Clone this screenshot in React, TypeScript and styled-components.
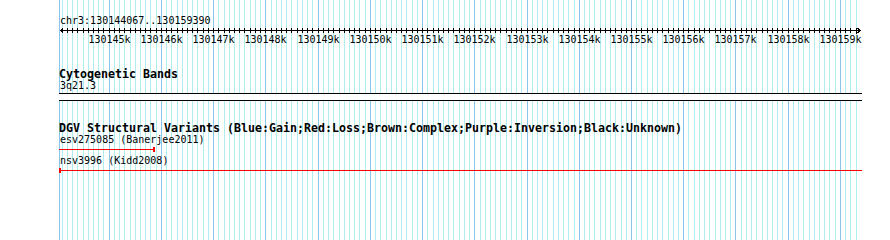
import React from 'react'
import styled, { createGlobalStyle } from 'styled-components'

const VIEW_START = 130144067
const VIEW_END = 130159390
const ORIGIN = 60.45
const SCALE = 0.052233 // px per bp
const WIDTH = 890
const HEIGHT = 240

const MINOR = '#afeeee'
const MAJOR = '#88c6ee'
const RED = '#ff0000'

const toX = (bp: number) => Math.floor(ORIGIN + (bp - VIEW_START) * SCALE)

const ticks: number[] = []
for (let bp = 130144100; bp <= 130159300; bp += 100) ticks.push(bp)
const majors = ticks.filter((bp) => bp % 1000 === 0)

type Feature = {
    name: string
    study: string
    start: number
    end: number
}

const variants: Feature[] = [
    { name: 'esv275085', study: 'Banerjee2011', start: 130140000, end: 130145860 },
    { name: 'nsv3996', study: 'Kidd2008', start: 130144050, end: 130170000 },
]

function Grid() {
    return (
        <GridLayer width={WIDTH} height={HEIGHT}>
            <rect x={59} y={0} width={1} height={HEIGHT} fill={MAJOR} />
            {ticks.map((bp) => (
                <rect
                    key={bp}
                    x={toX(bp)}
                    y={0}
                    width={1}
                    height={HEIGHT}
                    fill={bp % 1000 === 0 ? MAJOR : MINOR}
                />
            ))}
        </GridLayer>
    )
}

function Ruler() {
    const left = 60
    const right = 860
    return (
        <RulerSvg width={WIDTH} height={7}>
            <rect x={left} y={2} width={right - left + 1} height={1} fill="#000" />
            {ticks.map((bp) => (
                <rect key={bp} x={toX(bp)} y={0} width={1} height={5} fill="#000" />
            ))}
            <path d={`M${left + 3.5} -0.5 L${left + 0.5} 2.5 L${left + 3.5} 5.5`} stroke="#000" fill="none" />
            <path d={`M${right - 3.5} -0.5 L${right + 0.5} 2.5 L${right - 3.5} 5.5`} stroke="#000" fill="none" />
        </RulerSvg>
    )
}

function VariantGlyph({ feature }: { feature: Feature }) {
    const viewLeft = 59
    const viewRight = 861
    const startsInView = feature.start >= VIEW_START - 20
    const endsInView = feature.end <= VIEW_END
    const x1 = startsInView ? Math.max(viewLeft, toX(feature.start)) : viewLeft
    const x2 = endsInView ? toX(feature.end) : viewRight
    return (
        <>
            <SmallText>
                {feature.name} ({feature.study})
            </SmallText>
            <BarRow>
                <Bar style={{ left: x1, width: x2 - x1 + 1 }}>
                    {startsInView && <Cap $side="left" />}
                    {endsInView && <Cap $side="right" />}
                </Bar>
            </BarRow>
        </>
    )
}

export default function App() {
    return (
        <>
            <GlobalStyle />
            <Panel>
                <Grid />
                <Tracks>
                    <RulerTrack>
                        <SmallText>
                            chr3:{VIEW_START}..{VIEW_END}
                        </SmallText>
                        <Ruler />
                        <TickRow>
                            {majors.map((bp) => (
                                <TickLabel key={bp} style={{ left: toX(bp) + 0.5 }}>
                                    {bp / 1000}k
                                </TickLabel>
                            ))}
                        </TickRow>
                    </RulerTrack>

                    <Track>
                        <Heading>Cytogenetic Bands</Heading>
                        <SmallText>3q21.3</SmallText>
                        <Band />
                    </Track>

                    <Track>
                        <Heading>
                            DGV Structural Variants (Blue:Gain;Red:Loss;Brown:Complex;Purple:Inversion;Black:Unknown)
                        </Heading>
                        {variants.map((v, i) => (
                            <VariantBlock key={v.name} $first={i === 0}>
                                <VariantGlyph feature={v} />
                            </VariantBlock>
                        ))}
                    </Track>
                </Tracks>
            </Panel>
        </>
    )
}

const GlobalStyle = createGlobalStyle`
    body {
        margin: 0;
        background: #ffffff;
        font-family: "DejaVu Sans Mono", "Liberation Mono", monospace;
        color: #000;
    }
`

const Panel = styled.div`
    position: relative;
    width: ${WIDTH}px;
    height: ${HEIGHT}px;
    overflow: hidden;
    background: #ffffff;
`

const GridLayer = styled.svg`
    position: absolute;
    top: 0;
    left: 0;
    shape-rendering: crispEdges;
`

const Tracks = styled.div`
    position: relative;
    display: flex;
    flex-direction: column;
    padding-top: 16px;
`

const RulerTrack = styled.div`
    display: flex;
    flex-direction: column;
`

const Track = styled.div`
    display: flex;
    flex-direction: column;
    margin-top: 21px;
`

const SmallText = styled.div`
    padding-left: 60px;
    padding-bottom: 2px;
    font-size: 10px;
    line-height: 10px;
    height: 10px;
    white-space: nowrap;
`

const Heading = styled.div`
    padding-left: 59px;
    padding-bottom: 1px;
    font-size: 11.63px;
    font-weight: bold;
    line-height: 12px;
    height: 12px;
    white-space: nowrap;
`

const RulerSvg = styled.svg`
    display: block;
    shape-rendering: crispEdges;
`

const TickRow = styled.div`
    position: relative;
    height: 12px;
`

const TickLabel = styled.span`
    position: absolute;
    top: 0;
    transform: translateX(-50%);
    font-size: 10px;
    line-height: 10px;
    white-space: nowrap;
`

const Band = styled.div`
    margin-left: 59px;
    width: 803px;
    height: 6px;
    border-top: 1px solid #000;
    border-bottom: 1px solid #000;
    background: #ffffff;
`

const VariantBlock = styled.div<{ $first: boolean }>`
    display: flex;
    flex-direction: column;
    margin-top: ${(p) => (p.$first ? 0 : 4)}px;
`

const BarRow = styled.div`
    position: relative;
    height: 5px;
`

const Bar = styled.div`
    position: absolute;
    top: 2px;
    height: 1px;
    background: ${RED};
`

const Cap = styled.div<{ $side: 'left' | 'right' }>`
    position: absolute;
    top: -2px;
    ${(p) => (p.$side === 'left' ? 'left: 0;' : 'right: 0;')}
    width: 2px;
    height: 5px;
    background: ${RED};
`
